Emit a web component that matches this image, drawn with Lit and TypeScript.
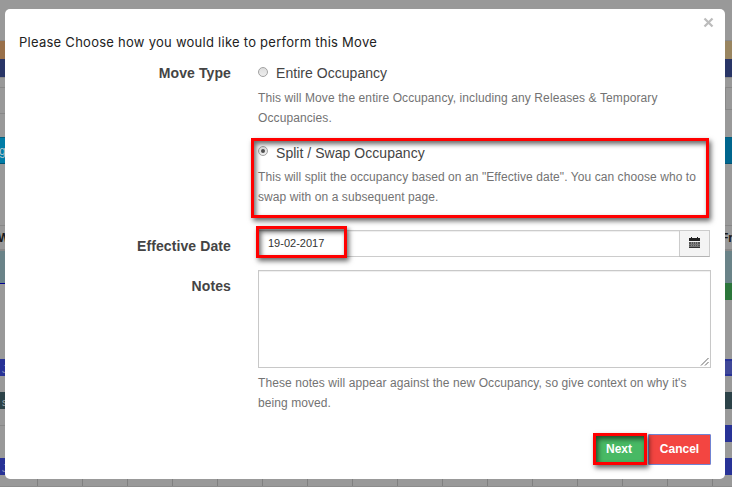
import { LitElement, html, css, svg } from "lit";
import { customElement, state } from "lit/decorators.js";
import { classMap } from "lit/directives/class-map.js";

type Band = [height: number, left: string, right: string, leftText?: string, rightText?: string];

/* Calendar rows behind the dialog, top to bottom. */
const BANDS: Band[] = [
  [40, "bg", "bg"],
  [1, "rule", "rule"],
  [18, "orange", "tan"],
  [18, "navy", "navy"],
  [1, "rule", "rule"],
  [9, "bg", "bg"],
  [1, "rule", "rule"],
  [21, "bg", "cell"],
  [1, "bg", "rule"],
  [3, "bg", "bg"],
  [1, "rule", "bg"],
  [23, "bg", "bg"],
  [27, "cyan", "teal", "g"],
  [61, "bg", "bg"],
  [1, "rule", "rule"],
  [23, "bg", "bg", "W", "Fr"],
  [2, "rule", "rule"],
  [32, "slate", "slate"],
  [1, "line", "green"],
  [16, "bg", "green"],
  [59, "bg", "bg"],
  [17, "blue", "outlined", "J"],
  [16, "bg", "bg"],
  [17, "dark", "dark", "s"],
  [16, "bg", "bg"],
  [1, "rule", "blue"],
  [16, "bg", "blue"],
  [16, "bg", "bg"],
  [17, "blue", "blue", "J"],
];

@customElement("schedule-backdrop")
export class ScheduleBackdrop extends LitElement {
  static styles = css`
    :host { display: flex; flex-direction: column; height: 487px; background: #999;
      font-family: "Liberation Sans", Arial, sans-serif; font-size: 12px; overflow: hidden; }
    .row { display: flex; justify-content: space-between; flex: none; }
    .end { width: 5px; overflow: hidden; box-sizing: border-box; display: flex; align-items: center; }
    .end.right { width: 7px; }
    .rule { background: #888; }
    .orange { background: #99704a; }
    .tan { background: #998560; }
    .navy { background: #293566; }
    .cell { border-left: 1px solid #888; margin-left: 1px; }
    .cyan { background: #007ca6; color: #b5c5cb; }
    .teal { background: #00658d; }
    .cyan, .teal { border-top: 1px solid #005f80; border-bottom: 1px solid #005577; }
    .slate { background: #6a8388; }
    .line { background: #000090; }
    .green { background: #2c763b; }
    .blue { background: #283296; color: #8389b8; }
    .outlined { background: #404898; border: 2px solid #283296; border-width: 2px 0; }
    .dark { background: #2c4248; color: #9fa9ac; }
    .bg { color: #181818; font-weight: bold; }
    .left span { margin-left: -1px; }
    .left.blue span, .left.dark span { margin-left: 2px; font-size: 10px; padding-top: 3px; }
    .left.bg span { margin-left: -2px; }
    .right span { margin-left: -4px; }
    .grid { flex: 1; display: flex; border-bottom: 1px solid #8c8c8c; }
    .col { flex: none; box-sizing: border-box; width: 45px; border-right: 1px solid #808080; }
    .col.first { width: 38px; }
  `;

  render() {
    return html`
      ${BANDS.map(([height, left, right, lt, rt]) => html`
        <div class="row" style="height:${height}px">
          <div class="end left ${left}"><span>${lt}</span></div>
          <div class="end right ${right}"><span>${rt}</span></div>
        </div>`)}
      <div class="grid">
        ${Array.from({ length: 16 }, (_, i) => html`<div class=${classMap({ col: true, first: i === 0 })}></div>`)}
      </div>`;
  }
}

@customElement("app-root")
export class AppRoot extends LitElement {
  @state() private moveType = "split";

  static styles = css`
    :host { display: block; position: relative; width: 732px; height: 487px; overflow: hidden;
      font-family: "Liberation Sans", Arial, sans-serif; color: #444; }
    .dialog { position: absolute; left: 5px; top: 9px; width: 720px; height: 470px;
      box-sizing: border-box; background: #fff; border-radius: 5px; padding: 23px 14px 0 13px; }
    .close { position: absolute; right: 11px; top: 8px; width: 11px; height: 11px; display: block; }
    .title { margin: 0; padding-left: 1px; font: 400 13px/20px Inter, sans-serif; letter-spacing: 0.26px; color: #222; white-space: nowrap; }
    .row { display: grid; grid-template-columns: 213px 453px; column-gap: 27px; }
    .row.type { margin-top: 11px; }
    .row.date { margin-top: 23px; }
    .row.notes { margin-top: 13px; }
    .label { text-align: right; font-size: 14px; font-weight: bold; line-height: 20px; letter-spacing: 0.1px; }
    .date .label { padding-top: 6px; }
    .notes .label { padding-top: 6px; }
    .option { display: flex; height: 20px; line-height: 20px; font-size: 14px; letter-spacing: 0.04px; }
    .option.second { margin-top: 15px; }
    .radio { width: 10px; height: 10px; box-sizing: border-box; flex: none; margin: 4px 8px 0 0; border-radius: 50%;
      border: 1px solid #a2a2a2; background: linear-gradient(#ddd, #eee); display: grid; place-items: center; }
    .radio.on::after { content: ""; width: 4px; height: 4px; border-radius: 50%; background: #505050; }
    .second .radio { margin-top: 3px; }
    .help { margin: 5px 0 0; font-size: 12px; line-height: 20px; color: #737373; white-space: nowrap; letter-spacing: 0.08px; }
    .type .help { letter-spacing: 0.1px; }
    .type .second + .help { margin-top: 4px; letter-spacing: 0.075px; }
    .marked { position: relative; }
    .mark { position: absolute; box-sizing: border-box; border: 3px solid #f00; pointer-events: none;
      box-shadow: 2px 3px 5px rgba(0,0,0,.6), inset 2px 3px 5px rgba(0,0,0,.6); }
    .mark.split { left: -7px; top: -5px; width: 458px; height: 80px; }
    .mark.day { left: -2px; top: -4px; width: 91px; height: 32px; }
    .mark.go { left: -1px; top: -1px; width: 54px; height: 32px; }
    .group { display: flex; height: 27px; width: 452px; }
    .input { flex: 1; box-sizing: border-box; border: 1px solid #ccc; border-right: 0; padding-left: 9px;
      font-size: 11px; line-height: 25px; color: #333; box-shadow: inset 0 1px 1px rgba(0,0,0,.07); }
    .addon { width: 31px; box-sizing: border-box; border: 1px solid #ccc; border-bottom-color: #b3b3b3;
      background: #f4f4f4; display: flex; justify-content: center; padding-top: 6px; }
    .addon svg { width: 11px; height: 12px; }
    .area { box-sizing: border-box; height: 98px; border: 1px solid #c8c8c8; display: flex;
      justify-content: flex-end; align-items: flex-end; padding: 1px; box-shadow: inset 0 1px 1px rgba(0,0,0,.07); }
    .area svg { width: 9px; height: 9px; }
    .actions { display: flex; justify-content: flex-end; margin-top: 21px; gap: 2px; }
    .btn { box-sizing: border-box; height: 31px; text-align: center; font-size: 12px; line-height: 30px;
      font-weight: bold; color: #fff; }
    .next { width: 52px; padding-right: 2px; background: #48b964; }
    .cancel { width: 63px; background: #f34541; border: 1px solid #7083d2; line-height: 29px; border-radius: 1px; }
  `;

  private radio(value: string) {
    return html`<span class=${classMap({ radio: true, on: this.moveType === value })}
      @click=${() => (this.moveType = value)}></span>`;
  }

  private calendar() {
    return html`<svg viewBox="0 0 11 12" shape-rendering="crispEdges">
      <path fill="#222" d="M2 0h1v1h5V0h1v1h2v3H0V1h2z" />
      <path fill="#555" d="M0 5h11v6H0z" />
      ${[2, 4, 6, 8].map((x) => svg`<path stroke="#888" stroke-width="1" d="M${x + 0.5} 5v6" />`)}
      <path stroke="#777" d="M0 7.5h11M0 9.5h11" />
      <path stroke="#333" d="M0 10.5h11" />
    </svg>`;
  }

  render() {
    return html`
      <schedule-backdrop></schedule-backdrop>
      <section class="dialog">
        <svg class="close" viewBox="0 0 11 11"><path d="M1.5 1.5l8 8M9.5 1.5l-8 8" stroke="#bcbcbc" stroke-width="2.3" /></svg>
        <h1 class="title">Please Choose how you would like to perform this Move</h1>
        <div class="row type">
          <div class="label">Move Type</div>
          <div>
            <div class="option">${this.radio("entire")}Entire Occupancy</div>
            <p class="help">This will Move the entire Occupancy, including any Releases &amp; Temporary<br />Occupancies.</p>
            <div class="marked">
              <div class="option second">${this.radio("split")}Split / Swap Occupancy</div>
              <p class="help">This will split the occupancy based on an "Effective date". You can choose who to<br />swap with on a subsequent page.</p>
              <div class="mark split"></div>
            </div>
          </div>
        </div>
        <div class="row date">
          <div class="label">Effective Date</div>
          <div class="group marked">
            <div class="input">19-02-2017</div>
            <div class="addon">${this.calendar()}</div>
            <div class="mark day"></div>
          </div>
        </div>
        <div class="row notes">
          <div class="label">Notes</div>
          <div>
            <div class="area"><svg viewBox="0 0 9 9"><path d="M1 8.5L8.5 1M5 8.5L8.5 5" stroke="#666" fill="none" /></svg></div>
            <p class="help">These notes will appear against the new Occupancy, so give context on why it's<br />being moved.</p>
          </div>
        </div>
        <div class="actions">
          <div class="btn next marked">Next<div class="mark go"></div></div>
          <div class="btn cancel">Cancel</div>
        </div>
      </section>`;
  }
}
